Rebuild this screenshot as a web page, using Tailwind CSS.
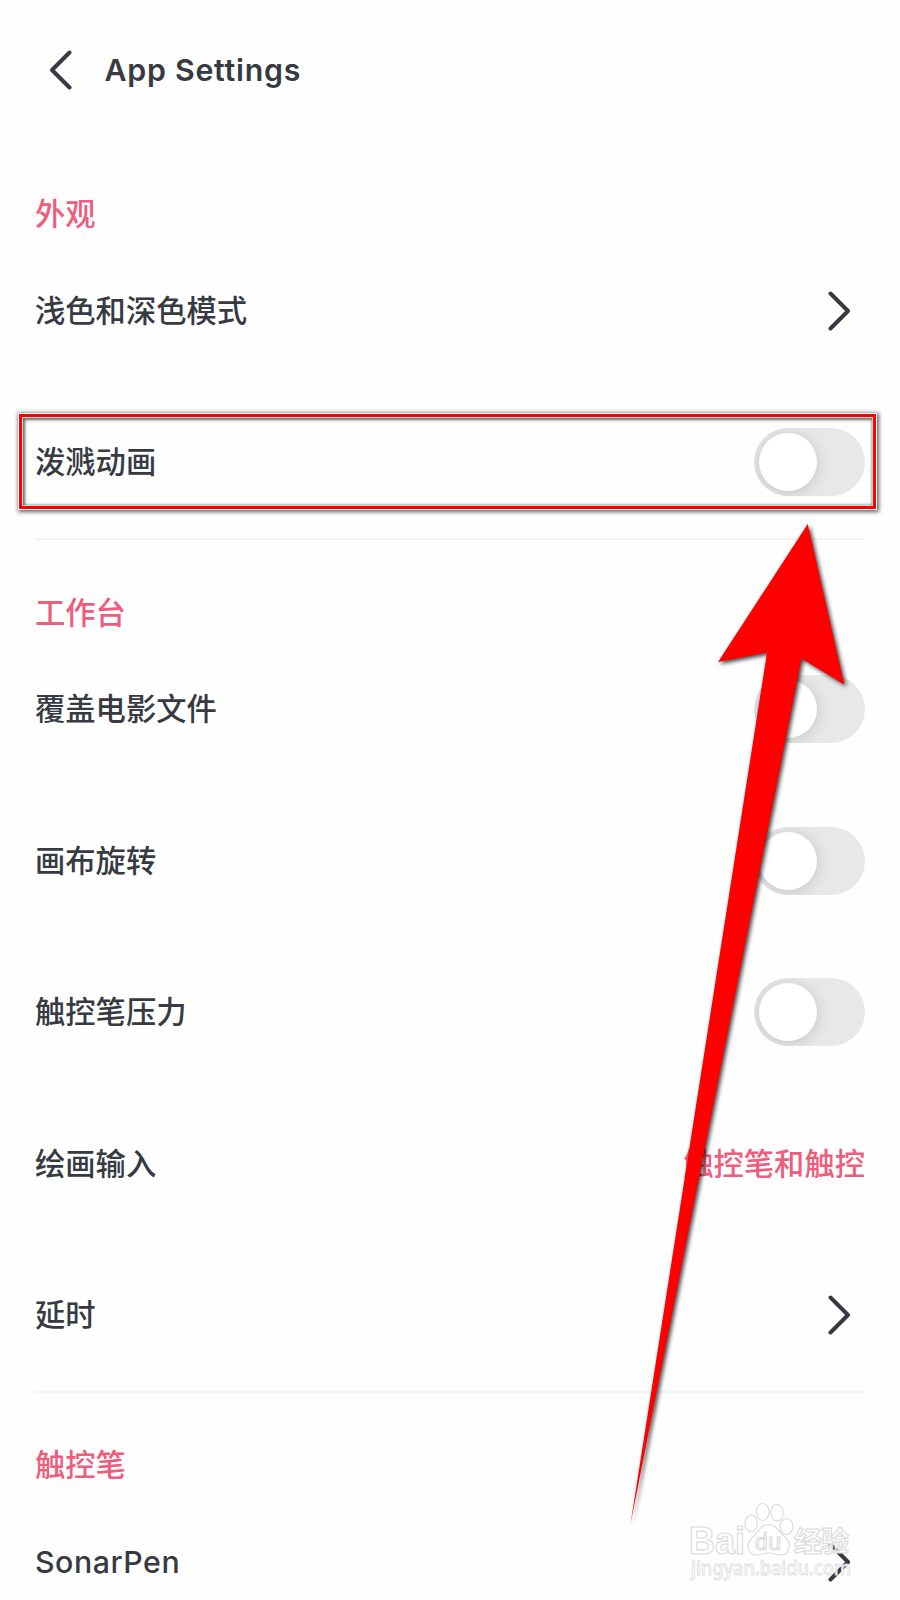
<!DOCTYPE html>
<html lang="zh-CN">
<head>
    <meta charset="UTF-8">
    <meta name="viewport" content="width=device-width, initial-scale=1.0">
    <title>App Settings</title>
    <script src="https://cdn.jsdelivr.net/npm/@tailwindcss/browser@4"></script>
</head>
<body class="bg-[#fefefe]">
<div class="relative w-[900px] h-[1600px] overflow-hidden text-[#373a42] text-[30.3px] leading-[42px] font-medium font-['Inter','Noto_Sans_CJK_SC',sans-serif]">
    <!-- 頂部標題 -->
    <header class="h-[140px] pl-[49px] pb-px flex items-center gap-[31.5px]">
        <svg class="w-6 h-10" viewBox="0 0 24 40" fill="none" stroke="currentColor" stroke-width="4" stroke-linecap="round" stroke-linejoin="round"><path d="M20.500 2.500L3 20L20.500 37.500"/></svg>
        <h1 class="font-semibold tracking-[0.75px]">App Settings</h1>
    </header>

    <main class="px-[35px]">
        <!-- 外觀 -->
        <section>
            <h2 class="h-[95px] pt-[53px] text-[#ee5d7c]">外观</h2>
            <div class="h-[151.5px] flex items-center justify-between">
                <span>浅色和深色模式</span>
                <svg class="w-6 h-10 mr-[14px]" viewBox="0 0 24 40" fill="none" stroke="currentColor" stroke-width="4" stroke-linecap="round" stroke-linejoin="round"><path d="M3.500 2.500L21 20L3.500 37.500"/></svg>
            </div>
            <div class="h-[151.5px] flex items-center justify-between">
                <span>泼溅动画</span>
                <div class="w-[111px] h-[68px] p-[5px] rounded-full bg-[#e8e8e8] overflow-hidden"><div class="size-[58px] rounded-full bg-white shadow-[0_2px_16px_rgba(0,0,0,0.16)]"></div></div>
            </div>
        </section>

        <!-- 工作台 -->
        <section>
            <h2 class="h-[95.5px] pt-[51.5px] border-t-2 border-[#f4f4f4] text-[#ee5d7c]">工作台</h2>
            <div class="h-[151.5px] flex items-center justify-between">
                <span>覆盖电影文件</span>
                <div class="w-[111px] h-[68px] p-[5px] rounded-full bg-[#e8e8e8] overflow-hidden"><div class="size-[58px] rounded-full bg-white shadow-[0_2px_16px_rgba(0,0,0,0.16)]"></div></div>
            </div>
            <div class="h-[151.5px] flex items-center justify-between">
                <span>画布旋转</span>
                <div class="w-[111px] h-[68px] p-[5px] rounded-full bg-[#e8e8e8] overflow-hidden"><div class="size-[58px] rounded-full bg-white shadow-[0_2px_16px_rgba(0,0,0,0.16)]"></div></div>
            </div>
            <div class="h-[151.5px] flex items-center justify-between">
                <span>触控笔压力</span>
                <div class="w-[111px] h-[68px] p-[5px] rounded-full bg-[#e8e8e8] overflow-hidden"><div class="size-[58px] rounded-full bg-white shadow-[0_2px_16px_rgba(0,0,0,0.16)]"></div></div>
            </div>
            <div class="h-[151.5px] flex items-center justify-between">
                <span>绘画输入</span>
                <span class="text-[#ee5d7c]">触控笔和触控</span>
            </div>
            <div class="h-[151.5px] flex items-center justify-between">
                <span>延时</span>
                <svg class="w-6 h-10 mr-[14px]" viewBox="0 0 24 40" fill="none" stroke="currentColor" stroke-width="4" stroke-linecap="round" stroke-linejoin="round"><path d="M3.500 2.500L21 20L3.500 37.500"/></svg>
            </div>
        </section>

        <!-- 觸控筆 -->
        <section>
            <h2 class="h-[95px] pt-[51px] border-t-2 border-[#f4f4f4] text-[#ee5d7c]">触控笔</h2>
            <div class="h-[151.5px] flex items-center justify-between">
                <span class="tracking-[0.55px]">SonarPen</span>
                <svg class="w-6 h-10 mr-[14px]" viewBox="0 0 24 40" fill="none" stroke="currentColor" stroke-width="4" stroke-linecap="round" stroke-linejoin="round"><path d="M3.500 2.500L21 20L3.500 37.500"/></svg>
            </div>
        </section>
    </main>

    <!-- 紅框與箭頭 -->
    <div class="absolute left-[18px] top-[413px] w-[859px] h-[97px] border border-white/80 shadow-[1px_1px_4px_1px_rgba(0,0,0,0.6)]">
        <div class="h-full border-3 border-[#ff0000]"><div class="h-full border border-[#d8d8d8] shadow-[inset_1px_1px_3px_1px_rgba(0,0,0,0.6)]"></div></div>
    </div>
    <svg class="absolute left-0 top-0 w-[900px] h-[1600px] drop-shadow-[2px_2px_2px_rgba(0,0,0,0.75)]" viewBox="0 0 900 1600">
        <path fill="#ff0000" d="M807.7 524L844.3 684.5L801.5 658.5L630.5 1524L767 652.5L718 662Z"/>
    </svg>

    <!-- 浮水印 -->
    <svg class="absolute left-[680px] top-[1495px] w-[180px] h-[100px]" viewBox="0 0 180 100" fill="#ffffff" fill-opacity="0.9" stroke="#dcdcdc" stroke-width="1.200" stroke-linejoin="round">
        <text x="9" y="59" textLength="56" lengthAdjust="spacingAndGlyphs" font-family="Liberation Sans" font-weight="700" font-size="38">Bai</text>
        <ellipse cx="71.200" cy="28.500" rx="6.300" ry="8.300"/>
        <ellipse cx="82.700" cy="17" rx="6.300" ry="8.500"/>
        <ellipse cx="97" cy="17.700" rx="6.300" ry="8.300"/>
        <ellipse cx="106.500" cy="31.500" rx="6.500" ry="8"/>
        <path d="M88.500 29.500C97 29.500 98.500 37 104 41C112 47 110.500 59.500 101 60C96 60.300 93 58 88.500 58C84 58 81 60.300 76 60C67 59 65.500 49 72.500 42.500C79 37 80 29.500 88.500 29.500Z"/>
        <text x="75" y="55" textLength="26" font-family="Liberation Sans" font-weight="400" font-size="23">du</text>
        <text x="114" y="57" textLength="55" font-family="Noto Sans CJK SC" font-weight="700" font-size="28">经验</text>
        <text x="11" y="80" textLength="160" lengthAdjust="spacingAndGlyphs" stroke-width="0.800" font-family="Noto Sans" font-size="19">jingyan.baidu.com</text>
    </svg>
</div>
</body>
</html>
